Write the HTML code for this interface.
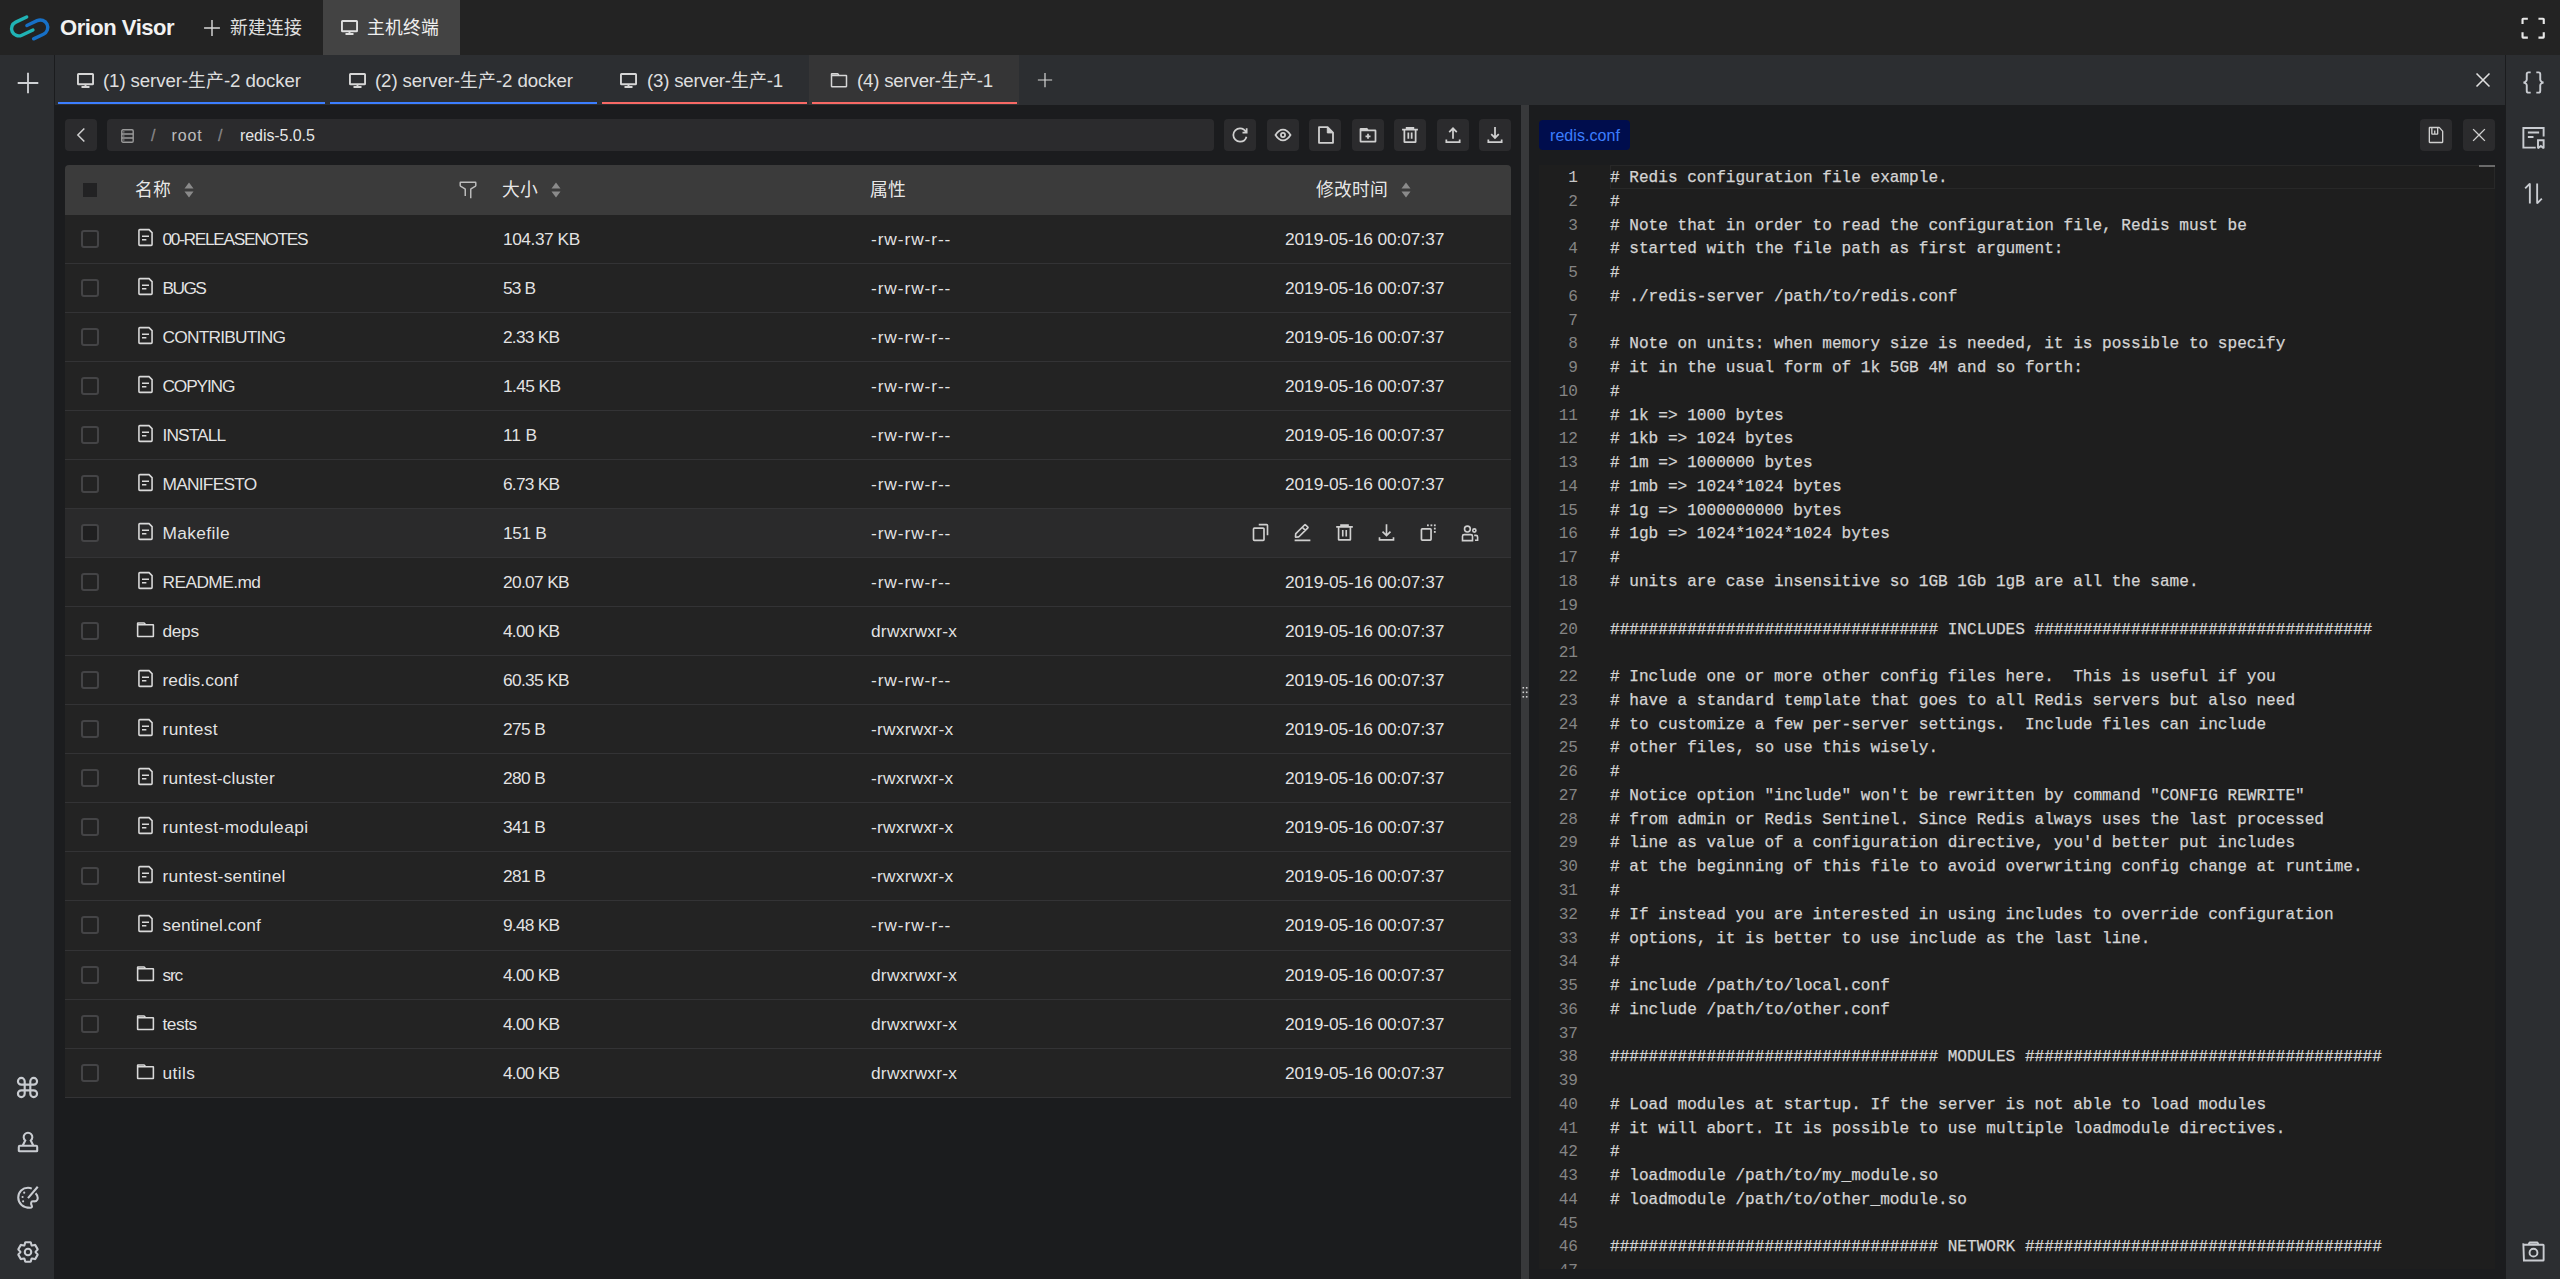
<!DOCTYPE html><html lang="zh-CN"><head><meta charset="utf-8"><title>Orion Visor</title><style>
*{box-sizing:border-box;margin:0;padding:0}
html,body{width:2560px;height:1279px;overflow:hidden;background:#1b1c1e}
body{position:relative;font-family:"Liberation Sans",sans-serif;color:rgba(255,255,255,.9)}
.abs{position:absolute}
svg{display:block;overflow:visible}
.ic{fill:none;stroke:currentColor;stroke-linecap:butt;stroke-linejoin:miter;stroke-miterlimit:2}
.t{white-space:nowrap;line-height:1}
.blk{position:absolute}
.zh{font-size:17.8px}
.wm{position:absolute;width:62px;height:24px;line-height:24px;text-align:center;font-size:22.5px;color:rgba(255,255,255,.022);transform:rotate(-28deg);white-space:nowrap}
.t .zh{letter-spacing:0}
</style></head><body>
<div class="blk" style="left:0;top:0;width:2560px;height:55px;background:#232323"></div>
<svg class="abs" style="left:0;top:0;width:55px;height:55px" viewBox="0 0 55 55">
<g transform="rotate(-25)" fill="none" stroke-width="3.4" stroke-linecap="round">
<path d="M17 26.7H4.9A7.2 7.2 0 0 0 4.9 41.1H17.2" stroke="#20b3b5"/>
<path d="M13.6 34.4H24.9A7.5 7.5 0 0 1 24.9 49.4H14" stroke="#1770c6"/>
</g></svg>
<div class="abs t" style="left:60px;top:16.5px;font-size:22px;color:#f2f2f2;letter-spacing:-0.484px;font-weight:bold">Orion Visor</div>
<svg class="abs ic" style="left:202px;top:18px;width:20px;height:20px;color:#d9d9d9;stroke-width:3.4px;" viewBox="0 0 48 48"><path d="M5 24h38M24 5v38"/></svg>
<div class="abs t" style="left:229.5px;top:19px;font-size:18.67px;color:#e0e0e0;"><span class="zh">新建连接</span></div>
<div class="blk" style="left:323px;top:0;width:137px;height:55px;background:#434343"></div>
<svg class="abs" style="left:341px;top:20px;width:17px;height:15px" viewBox="0 0 17 15" fill="none" stroke="#e0e0e0" stroke-width="1.9"><rect x="0.95" y="0.95" width="15.1" height="10.3" rx="0.6"/><path d="M8.5 11.3v2.7M4.5 14h8"/></svg>
<div class="abs t" style="left:366.5px;top:19px;font-size:18.67px;color:#f0f0f0;"><span class="zh">主机终端</span></div>
<svg class="abs ic" style="left:2518.6px;top:13.7px;width:28.3px;height:28.3px;color:#e8e8e8;stroke-width:3.6px;" viewBox="0 0 48 48"><path d="M42 17V9a1 1 0 0 0-1-1h-8M6 17V9a1 1 0 0 1 1-1h8m27 23v8a1 1 0 0 1-1 1h-8M6 31v8a1 1 0 0 0 1 1h8"/></svg>
<div class="blk" style="left:0;top:55px;width:54px;height:1224px;background:#2c2e31"></div>
<div class="blk" style="left:55px;top:55px;width:2450px;height:50px;background:#2c2e31"></div>
<div class="blk" style="left:2506px;top:55px;width:54px;height:1224px;background:#2c2e31"></div>
<svg class="abs ic" style="left:15px;top:70px;width:26px;height:26px;color:#cfd1d4;stroke-width:3.4px;" viewBox="0 0 48 48"><path d="M5 24h38M24 5v38"/></svg>
<svg class="abs ic" style="left:14px;top:1073.5px;width:27px;height:27px;color:#c9ccd1;stroke-width:3.8px;" viewBox="0 0 48 48"><path d="M29 19v-6a6 6 0 1 1 6 6h-6Zm0 0v10m0-10H19m10 10v6a6 6 0 1 0 6-6h-6Zm0 0H19m0 0V19m0 10v6a6 6 0 1 1-6-6h6Zm0-10v-6a6 6 0 1 0-6 6h6Z"/></svg>
<svg class="abs ic" style="left:14.5px;top:1129px;width:26px;height:26px;color:#c9ccd1;stroke-width:3.8px;" viewBox="0 0 48 48"><path d="M7 33a2 2 0 0 1 2-2h30a2 2 0 0 1 2 2v7a1 1 0 0 1-1 1H8a1 1 0 0 1-1-1v-7ZM29.081 21.18a8 8 0 1 0-10.163 0L14 31h20l-4.919-9.82Z"/></svg>
<svg class="abs ic" style="left:14.5px;top:1184px;width:26px;height:26px;color:#c9ccd1;stroke-width:3.8px;" viewBox="0 0 48 48"><path d="M38 17c3 3 4 6 4 9 0 7-6 6-9 6-4 0-4 5-2 8 1 2 0 4-3 4C15 44 6 36 6 25 6 14 14 7 24 7c3 0 5 .5 7 1.5"/><path d="M42 5 24 26"/><circle cx="14" cy="24" r="2" fill="currentColor" stroke="none"/><circle cx="17" cy="16" r="2" fill="currentColor" stroke="none"/><circle cx="15" cy="32" r="2" fill="currentColor" stroke="none"/></svg>
<svg class="abs ic" style="left:14.5px;top:1238.5px;width:26px;height:26px;color:#c9ccd1;stroke-width:3.8px;" viewBox="0 0 48 48"><path d="M18.797 6.732A1 1 0 0 1 19.76 6h8.48a1 1 0 0 1 .964.732l1.285 4.628a1 1 0 0 0 1.213.7l4.651-1.2a1 1 0 0 1 1.116.468l4.24 7.344a1 1 0 0 1-.153 1.2L38.193 23.3a1 1 0 0 0 0 1.402l3.364 3.427a1 1 0 0 1 .153 1.2l-4.24 7.344a1 1 0 0 1-1.116.468l-4.65-1.2a1 1 0 0 0-1.214.7l-1.285 4.628a1 1 0 0 1-.964.732h-8.48a1 1 0 0 1-.963-.732L17.51 36.64a1 1 0 0 0-1.213-.7l-4.65 1.2a1 1 0 0 1-1.116-.468l-4.24-7.344a1 1 0 0 1 .153-1.2L9.809 24.7a1 1 0 0 0 0-1.402l-3.364-3.427a1 1 0 0 1-.153-1.2l4.24-7.344a1 1 0 0 1 1.116-.468l4.65 1.2a1 1 0 0 0 1.213-.7l1.286-4.628Z"/><path d="M30 24a6 6 0 1 1-12 0 6 6 0 0 1 12 0Z"/></svg>
<svg class="abs ic" style="left:2520px;top:69px;width:27px;height:27px;color:#c9ccd1;stroke-width:3.4px;" viewBox="0 0 48 48"><path d="M19 6h-4a3 3 0 0 0-3 3v10c0 3-4.343 5-6 5 1.657 0 6 2 6 5v10a3 3 0 0 0 3 3h4M29 6h4a3 3 0 0 1 3 3v10c0 3 4.343 5 6 5-1.657 0-6 2-6 5v10a3 3 0 0 1-3 3h-4"/></svg>
<svg class="abs ic" style="left:2520px;top:124px;width:27px;height:27px;color:#c9ccd1;stroke-width:3.4px;" viewBox="0 0 48 48"><path d="M42 22V7H6v35h22M14 15h20M14 23h10"/><path d="M32 29h10v14l-5-4-5 4V29Z"/></svg>
<svg class="abs ic" style="left:2520.5px;top:180.5px;width:25px;height:25px;color:#c9ccd1;stroke-width:3.6px;" viewBox="0 0 48 48"><path d="M17 43V5L8 14M31 5v38l9-9"/></svg>
<svg class="abs ic" style="left:2520px;top:1238px;width:27px;height:27px;color:#c9ccd1;stroke-width:3.4px;" viewBox="0 0 48 48"><path d="m33 12-1.862-3.724A.5.5 0 0 0 30.691 8H17.309a.5.5 0 0 0-.447.276L15 12m16 14a7 7 0 1 1-14 0 7 7 0 0 1 14 0ZM7 40h34a1 1 0 0 0 1-1V13a1 1 0 0 0-1-1H7a1 1 0 0 0-1-1Z"/></svg>
<div class="blk" style="left:809px;top:55px;width:210px;height:50px;background:#353536"></div>
<div class="blk" style="left:58px;top:102px;width:267px;height:2px;background:#3c7eff"></div>
<svg class="abs" style="left:77px;top:73px;width:17px;height:15px" viewBox="0 0 17 15" fill="none" stroke="#d6d6d6" stroke-width="1.9"><rect x="0.95" y="0.95" width="15.1" height="10.3" rx="0.6"/><path d="M8.5 11.3v2.7M4.5 14h8"/></svg>
<div class="abs t" style="left:103px;top:71.5px;font-size:18.67px;color:rgba(255,255,255,.86);letter-spacing:-0.1px">(1) server-<span class="zh">生产</span>-2 docker</div>
<div class="blk" style="left:330px;top:102px;width:267px;height:2px;background:#3c7eff"></div>
<svg class="abs" style="left:349px;top:73px;width:17px;height:15px" viewBox="0 0 17 15" fill="none" stroke="#d6d6d6" stroke-width="1.9"><rect x="0.95" y="0.95" width="15.1" height="10.3" rx="0.6"/><path d="M8.5 11.3v2.7M4.5 14h8"/></svg>
<div class="abs t" style="left:375px;top:71.5px;font-size:18.67px;color:rgba(255,255,255,.86);letter-spacing:-0.1px">(2) server-<span class="zh">生产</span>-2 docker</div>
<div class="blk" style="left:602px;top:102px;width:205px;height:2px;background:#f76965"></div>
<svg class="abs" style="left:620px;top:73px;width:17px;height:15px" viewBox="0 0 17 15" fill="none" stroke="#d6d6d6" stroke-width="1.9"><rect x="0.95" y="0.95" width="15.1" height="10.3" rx="0.6"/><path d="M8.5 11.3v2.7M4.5 14h8"/></svg>
<div class="abs t" style="left:647px;top:71.5px;font-size:18.67px;color:rgba(255,255,255,.86);letter-spacing:-0.2px">(3) server-<span class="zh">生产</span>-1</div>
<div class="blk" style="left:812px;top:102px;width:205px;height:2px;background:#f76965"></div>
<svg class="abs ic" style="left:829px;top:70px;width:20px;height:20px;color:#d6d6d6;stroke-width:3.6px;" viewBox="0 0 48 48"><path d="M6 13h18l-2.527-3.557a1.077 1.077 0 0 0-.88-.443H6.774C6.346 9 6 9.336 6 9.75v29.5c0 .414.346.75.773.75h34.454c.427 0 .773-.336.773-.75V13.75c0-.414-.346-.75-.773-.75H24"/></svg>
<div class="abs t" style="left:857px;top:71.5px;font-size:18.67px;color:rgba(255,255,255,.86);letter-spacing:-0.2px">(4) server-<span class="zh">生产</span>-1</div>
<svg class="abs ic" style="left:1036px;top:71px;width:18px;height:18px;color:#d6d6d6;stroke-width:3.2px;" viewBox="0 0 48 48"><path d="M5 24h38M24 5v38"/></svg>
<svg class="abs ic" style="left:2472px;top:69px;width:22px;height:22px;color:#e0e0e0;stroke-width:3.4px;" viewBox="0 0 48 48"><path d="M9.857 9.858 24 24m0 0 14.142 14.142M24 24 38.142 9.858M24 24 9.857 38.142"/></svg>
<div class="blk" style="left:65px;top:119px;width:32px;height:32px;border-radius:4px;background:#2b2b2d"></div>
<svg class="abs ic" style="left:71px;top:125px;width:20px;height:20px;color:#cfcfcf;stroke-width:3.6px;" viewBox="0 0 48 48"><path d="M32 8.4 16.444 23.956 32 39.513"/></svg>
<div class="blk" style="left:107px;top:119px;width:1107px;height:32px;border-radius:4px;background:#2b2b2d"></div>
<svg class="abs" style="left:121px;top:128.5px;width:13px;height:14px" viewBox="0 0 13 14" fill="none" stroke="#9a9a9a" stroke-width="1.4"><rect x="0.8" y="0.8" width="11.4" height="12.4" rx="1.2"/><path d="M0.8 5H12.2M0.8 9H12.2"/><g fill="#9a9a9a" stroke="none"><rect x="2.2" y="2.3" width="1.2" height="1.2"/><rect x="2.2" y="6.4" width="1.2" height="1.2"/><rect x="2.2" y="10.4" width="1.2" height="1.2"/></g></svg>
<div class="abs t" style="left:151px;top:127.5px;font-size:16px;color:rgba(255,255,255,.38);-webkit-text-stroke:0.4px rgba(255,255,255,.3)">/</div>
<div class="abs t" style="left:171.5px;top:127.5px;font-size:16px;color:rgba(255,255,255,.7);letter-spacing:0.892px;">root</div>
<div class="abs t" style="left:218px;top:127.5px;font-size:16px;color:rgba(255,255,255,.38);-webkit-text-stroke:0.4px rgba(255,255,255,.3)">/</div>
<div class="abs t" style="left:240px;top:127.5px;font-size:16px;color:rgba(255,255,255,.9);letter-spacing:-0.070px;">redis-5.0.5</div>
<div class="blk" style="left:1224.0px;top:119px;width:32px;height:32px;border-radius:4px;background:#2b2b2d"></div>
<svg class="abs ic" style="left:1230.0px;top:125px;width:20px;height:20px;color:#d0d0d0;stroke-width:4.2px;" viewBox="0 0 48 48"><path d="M38.837 18C36.463 12.136 30.715 8 24 8 15.163 8 8 15.163 8 24s7.163 16 16 16c7.455 0 13.72-5.1 15.496-12M40 8v10H30"/></svg>
<div class="blk" style="left:1266.5px;top:119px;width:32px;height:32px;border-radius:4px;background:#2b2b2d"></div>
<svg class="abs ic" style="left:1272.5px;top:125px;width:20px;height:20px;color:#d0d0d0;stroke-width:4.2px;" viewBox="0 0 48 48"><path d="M24 37c6.627 0 12.627-4.333 18-13-5.373-8.667-11.373-13-18-13-6.627 0-12.627 4.333-18 13 5.373 8.667 11.373 13 18 13Z"/><path d="M29 24a5 5 0 1 1-10 0 5 5 0 0 1 10 0Z"/></svg>
<div class="blk" style="left:1309.0px;top:119px;width:32px;height:32px;border-radius:4px;background:#2b2b2d"></div>
<svg class="abs" style="left:1317.5px;top:126px;width:16px;height:18px" viewBox="0 0 16 18" fill="none" stroke="#d0d0d0" stroke-width="1.8" stroke-linejoin="round"><path d="M1 1.2H9.6L15 6.6V16.8H1Z"/><path d="M9.3 1.6V6.9H14.6Z" fill="#d0d0d0" stroke-width="1"/></svg>
<div class="blk" style="left:1351.5px;top:119px;width:32px;height:32px;border-radius:4px;background:#2b2b2d"></div>
<svg class="abs ic" style="left:1357.5px;top:125px;width:20px;height:20px;color:#d0d0d0;stroke-width:4.2px;" viewBox="0 0 48 48"><path d="M6 13h18l-2.527-3.557a1.077 1.077 0 0 0-.88-.443H6.774C6.346 9 6 9.336 6 9.75v29.5c0 .414.346.75.773.75h34.454c.427 0 .773-.336.773-.75V13.75c0-.414-.346-.75-.773-.75H24M24 21v12M18 27h12"/></svg>
<div class="blk" style="left:1394.0px;top:119px;width:32px;height:32px;border-radius:4px;background:#2b2b2d"></div>
<svg class="abs ic" style="left:1400.0px;top:125px;width:20px;height:20px;color:#d0d0d0;stroke-width:4.2px;" viewBox="0 0 48 48"><path d="M5 11h5.5m0 0v29a1 1 0 0 0 1 1h25a1 1 0 0 0 1-1V11m-27 0H16m21.5 0H43m-5.5 0H32m-16 0V7h16v4m-16 0h16M20 18v15m8-15v15"/></svg>
<div class="blk" style="left:1436.5px;top:119px;width:32px;height:32px;border-radius:4px;background:#2b2b2d"></div>
<svg class="abs ic" style="left:1442.5px;top:125px;width:20px;height:20px;color:#d0d0d0;stroke-width:4.2px;" viewBox="0 0 48 48"><path d="M14.93 17.071 24.001 8l9.071 9.071m-9.07 16.071v-25M40 35v6H8v-6"/></svg>
<div class="blk" style="left:1479.0px;top:119px;width:32px;height:32px;border-radius:4px;background:#2b2b2d"></div>
<svg class="abs ic" style="left:1485.0px;top:125px;width:20px;height:20px;color:#d0d0d0;stroke-width:4.2px;" viewBox="0 0 48 48"><path d="m33.072 22.071-9.07 9.071-9.072-9.07M24 5v26m16 4v6H8v-6"/></svg>
<div class="blk" style="left:65px;top:165px;width:1446px;height:50px;border-radius:4px 4px 0 0;background:#3b3b3b"></div>
<div class="blk" style="left:83px;top:183px;width:14px;height:14px;background:#222223"></div>
<div class="abs t" style="left:135px;top:181px;font-size:18.67px;color:rgba(255,255,255,.9);"><span class="zh">名称</span></div>
<svg class="abs" style="left:184px;top:182px;width:10px;height:16px" viewBox="0 0 10 16"><path d="M5 0.5 9.5 6.5H0.5Z M5 15.5 9.5 9.5H0.5Z" fill="#8a8a8a"/></svg>
<svg class="abs ic" style="left:457px;top:179px;width:22px;height:22px;color:#bdbdbd;stroke-width:3.2px;" viewBox="0 0 48 48"><path d="M30 42V22.549a1 1 0 0 1 .463-.844l10.074-6.41A1 1 0 0 0 41 14.45V8a1 1 0 0 0-1-1H8a1 1 0 0 0-1 1v6.451a1 1 0 0 0 .463.844l10.074 6.41a1 1 0 0 1 .463.844V37"/></svg>
<div class="abs t" style="left:502px;top:181px;font-size:18.67px;color:rgba(255,255,255,.9);"><span class="zh">大小</span></div>
<svg class="abs" style="left:551px;top:182px;width:10px;height:16px" viewBox="0 0 10 16"><path d="M5 0.5 9.5 6.5H0.5Z M5 15.5 9.5 9.5H0.5Z" fill="#8a8a8a"/></svg>
<div class="abs t" style="left:870px;top:181px;font-size:18.67px;color:rgba(255,255,255,.9);"><span class="zh">属性</span></div>
<div class="abs t" style="left:1316px;top:181px;font-size:18.67px;color:rgba(255,255,255,.9);"><span class="zh">修改时间</span></div>
<svg class="abs" style="left:1401px;top:182px;width:10px;height:16px" viewBox="0 0 10 16"><path d="M5 0.5 9.5 6.5H0.5Z M5 15.5 9.5 9.5H0.5Z" fill="#8a8a8a"/></svg>
<div class="blk" style="left:65px;top:215px;width:1446px;height:49px;background:#232323;border-bottom:1px solid #333335"></div>
<div class="blk" style="left:81px;top:230px;width:18px;height:18px;border:2px solid #444446;border-radius:3px;"></div>
<svg class="abs ic" style="left:134.8px;top:226.7px;width:21px;height:21px;color:#d9d9d9;stroke-width:3.6px;" viewBox="0 0 48 48"><path d="M16 21h16m-16 8h10m11 13H11a2 2 0 0 1-2-2V8a2 2 0 0 1 2-2h21l7 7v27a2 2 0 0 1-2 2Z"/></svg>
<div class="abs t" style="left:162.5px;top:230.7px;font-size:17.33px;color:rgba(255,255,255,.88);letter-spacing:-1.330px;">00-RELEASENOTES</div>
<div class="abs t" style="left:503px;top:230.7px;font-size:17.33px;color:rgba(255,255,255,.88);letter-spacing:-0.459px;">104.37 KB</div>
<div class="abs t" style="left:871px;top:230.7px;font-size:17.33px;color:rgba(255,255,255,.88);letter-spacing:0.909px;">-rw-rw-r--</div>
<div class="abs t" style="left:1285px;top:230.7px;font-size:17.33px;color:rgba(255,255,255,.88);letter-spacing:-0.087px;">2019-05-16 00:07:37</div>
<div class="blk" style="left:65px;top:264px;width:1446px;height:49px;background:#232323;border-bottom:1px solid #333335"></div>
<div class="blk" style="left:81px;top:279px;width:18px;height:18px;border:2px solid #444446;border-radius:3px;"></div>
<svg class="abs ic" style="left:134.8px;top:275.7px;width:21px;height:21px;color:#d9d9d9;stroke-width:3.6px;" viewBox="0 0 48 48"><path d="M16 21h16m-16 8h10m11 13H11a2 2 0 0 1-2-2V8a2 2 0 0 1 2-2h21l7 7v27a2 2 0 0 1-2 2Z"/></svg>
<div class="abs t" style="left:162.5px;top:279.7px;font-size:17.33px;color:rgba(255,255,255,.88);letter-spacing:-1.583px;">BUGS</div>
<div class="abs t" style="left:503px;top:279.7px;font-size:17.33px;color:rgba(255,255,255,.88);letter-spacing:-0.829px;">53 B</div>
<div class="abs t" style="left:871px;top:279.7px;font-size:17.33px;color:rgba(255,255,255,.88);letter-spacing:0.909px;">-rw-rw-r--</div>
<div class="abs t" style="left:1285px;top:279.7px;font-size:17.33px;color:rgba(255,255,255,.88);letter-spacing:-0.087px;">2019-05-16 00:07:37</div>
<div class="blk" style="left:65px;top:313px;width:1446px;height:49px;background:#232323;border-bottom:1px solid #333335"></div>
<div class="blk" style="left:81px;top:328px;width:18px;height:18px;border:2px solid #444446;border-radius:3px;"></div>
<svg class="abs ic" style="left:134.8px;top:324.7px;width:21px;height:21px;color:#d9d9d9;stroke-width:3.6px;" viewBox="0 0 48 48"><path d="M16 21h16m-16 8h10m11 13H11a2 2 0 0 1-2-2V8a2 2 0 0 1 2-2h21l7 7v27a2 2 0 0 1-2 2Z"/></svg>
<div class="abs t" style="left:162.5px;top:328.7px;font-size:17.33px;color:rgba(255,255,255,.88);letter-spacing:-0.773px;">CONTRIBUTING</div>
<div class="abs t" style="left:503px;top:328.7px;font-size:17.33px;color:rgba(255,255,255,.88);letter-spacing:-0.766px;">2.33 KB</div>
<div class="abs t" style="left:871px;top:328.7px;font-size:17.33px;color:rgba(255,255,255,.88);letter-spacing:0.909px;">-rw-rw-r--</div>
<div class="abs t" style="left:1285px;top:328.7px;font-size:17.33px;color:rgba(255,255,255,.88);letter-spacing:-0.087px;">2019-05-16 00:07:37</div>
<div class="blk" style="left:65px;top:362px;width:1446px;height:49px;background:#232323;border-bottom:1px solid #333335"></div>
<div class="blk" style="left:81px;top:377px;width:18px;height:18px;border:2px solid #444446;border-radius:3px;"></div>
<svg class="abs ic" style="left:134.8px;top:373.7px;width:21px;height:21px;color:#d9d9d9;stroke-width:3.6px;" viewBox="0 0 48 48"><path d="M16 21h16m-16 8h10m11 13H11a2 2 0 0 1-2-2V8a2 2 0 0 1 2-2h21l7 7v27a2 2 0 0 1-2 2Z"/></svg>
<div class="abs t" style="left:162.5px;top:377.7px;font-size:17.33px;color:rgba(255,255,255,.88);letter-spacing:-1.173px;">COPYING</div>
<div class="abs t" style="left:503px;top:377.7px;font-size:17.33px;color:rgba(255,255,255,.88);letter-spacing:-0.600px;">1.45 KB</div>
<div class="abs t" style="left:871px;top:377.7px;font-size:17.33px;color:rgba(255,255,255,.88);letter-spacing:0.909px;">-rw-rw-r--</div>
<div class="abs t" style="left:1285px;top:377.7px;font-size:17.33px;color:rgba(255,255,255,.88);letter-spacing:-0.087px;">2019-05-16 00:07:37</div>
<div class="blk" style="left:65px;top:411px;width:1446px;height:49px;background:#232323;border-bottom:1px solid #333335"></div>
<div class="blk" style="left:81px;top:426px;width:18px;height:18px;border:2px solid #444446;border-radius:3px;"></div>
<svg class="abs ic" style="left:134.8px;top:422.7px;width:21px;height:21px;color:#d9d9d9;stroke-width:3.6px;" viewBox="0 0 48 48"><path d="M16 21h16m-16 8h10m11 13H11a2 2 0 0 1-2-2V8a2 2 0 0 1 2-2h21l7 7v27a2 2 0 0 1-2 2Z"/></svg>
<div class="abs t" style="left:162.5px;top:426.7px;font-size:17.33px;color:rgba(255,255,255,.88);letter-spacing:-0.897px;">INSTALL</div>
<div class="abs t" style="left:503px;top:426.7px;font-size:17.33px;color:rgba(255,255,255,.88);letter-spacing:-0.067px;">11 B</div>
<div class="abs t" style="left:871px;top:426.7px;font-size:17.33px;color:rgba(255,255,255,.88);letter-spacing:0.909px;">-rw-rw-r--</div>
<div class="abs t" style="left:1285px;top:426.7px;font-size:17.33px;color:rgba(255,255,255,.88);letter-spacing:-0.087px;">2019-05-16 00:07:37</div>
<div class="blk" style="left:65px;top:460px;width:1446px;height:49px;background:#232323;border-bottom:1px solid #333335"></div>
<div class="blk" style="left:81px;top:475px;width:18px;height:18px;border:2px solid #444446;border-radius:3px;"></div>
<svg class="abs ic" style="left:134.8px;top:471.7px;width:21px;height:21px;color:#d9d9d9;stroke-width:3.6px;" viewBox="0 0 48 48"><path d="M16 21h16m-16 8h10m11 13H11a2 2 0 0 1-2-2V8a2 2 0 0 1 2-2h21l7 7v27a2 2 0 0 1-2 2Z"/></svg>
<div class="abs t" style="left:162.5px;top:475.7px;font-size:17.33px;color:rgba(255,255,255,.88);letter-spacing:-0.749px;">MANIFESTO</div>
<div class="abs t" style="left:503px;top:475.7px;font-size:17.33px;color:rgba(255,255,255,.88);letter-spacing:-0.766px;">6.73 KB</div>
<div class="abs t" style="left:871px;top:475.7px;font-size:17.33px;color:rgba(255,255,255,.88);letter-spacing:0.909px;">-rw-rw-r--</div>
<div class="abs t" style="left:1285px;top:475.7px;font-size:17.33px;color:rgba(255,255,255,.88);letter-spacing:-0.087px;">2019-05-16 00:07:37</div>
<div class="blk" style="left:65px;top:509px;width:1446px;height:49px;background:#2a2a2b;border-bottom:1px solid #333335"></div>
<div class="blk" style="left:81px;top:524px;width:18px;height:18px;border:2px solid #444446;border-radius:3px;background:#1f1f20;"></div>
<svg class="abs ic" style="left:134.8px;top:520.7px;width:21px;height:21px;color:#d9d9d9;stroke-width:3.6px;" viewBox="0 0 48 48"><path d="M16 21h16m-16 8h10m11 13H11a2 2 0 0 1-2-2V8a2 2 0 0 1 2-2h21l7 7v27a2 2 0 0 1-2 2Z"/></svg>
<div class="abs t" style="left:162.5px;top:524.7px;font-size:17.33px;color:rgba(255,255,255,.88);letter-spacing:0.359px;">Makefile</div>
<div class="abs t" style="left:503px;top:524.7px;font-size:17.33px;color:rgba(255,255,255,.88);letter-spacing:-0.381px;">151 B</div>
<div class="abs t" style="left:871px;top:524.7px;font-size:17.33px;color:rgba(255,255,255,.88);letter-spacing:0.909px;">-rw-rw-r--</div>
<svg class="abs ic" style="left:1249.5px;top:522px;width:21px;height:21px;color:#cfcfcf;stroke-width:3.8px;" viewBox="0 0 48 48"><path d="M20 6h18a2 2 0 0 1 2 2v22M8 16v24c0 1.105.891 2 1.996 2h20.007A1.99 1.99 0 0 0 32 40.008V15.997A1.997 1.997 0 0 0 30 14H10a2 2 0 0 0-2 2Z"/></svg>
<svg class="abs ic" style="left:1291.5px;top:522px;width:21px;height:21px;color:#cfcfcf;stroke-width:3.8px;" viewBox="0 0 48 48"><path d="m30.48 19.038 5.733-5.734a1 1 0 0 0 0-1.414l-5.586-5.586a1 1 0 0 0-1.414 0l-5.734 5.734m7 7L15.763 33.754a1 1 0 0 1-.59.286l-6.048.708a1 1 0 0 1-1.113-1.069l.477-6.31a1 1 0 0 1 .29-.631l14.7-14.7m7 7-7-7M6 42h36"/></svg>
<svg class="abs ic" style="left:1333.5px;top:522px;width:21px;height:21px;color:#cfcfcf;stroke-width:3.8px;" viewBox="0 0 48 48"><path d="M5 11h5.5m0 0v29a1 1 0 0 0 1 1h25a1 1 0 0 0 1-1V11m-27 0H16m21.5 0H43m-5.5 0H32m-16 0V7h16v4m-16 0h16M20 18v15m8-15v15"/></svg>
<svg class="abs ic" style="left:1375.5px;top:522px;width:21px;height:21px;color:#cfcfcf;stroke-width:3.8px;" viewBox="0 0 48 48"><path d="m33.072 22.071-9.07 9.071-9.072-9.07M24 5v26m16 4v6H8v-6"/></svg>
<svg class="abs" style="left:1419px;top:522px;width:18px;height:20px" viewBox="0 0 18 20" fill="none" stroke="#cfcfcf" stroke-width="1.7"><rect x="2.45" y="6.95" width="9.6" height="11.1" rx="0.8"/><g fill="#cfcfcf" stroke="none"><rect x="8" y="2.4" width="1.8" height="1.8"/><rect x="11.5" y="2.4" width="1.8" height="1.8"/><rect x="14.9" y="2.4" width="1.8" height="1.8"/><rect x="14.9" y="5.7" width="1.8" height="1.8"/><rect x="14.9" y="9" width="1.8" height="1.8"/></g></svg>
<svg class="abs" style="left:1460px;top:522px;width:20px;height:20px" viewBox="0 0 20 20" fill="none" stroke="#cfcfcf" stroke-width="1.6"><circle cx="7.4" cy="7.05" r="2.9"/><circle cx="14.35" cy="8.5" r="1.6"/><path d="M2.5 18.6V14.2a1.6 1.6 0 0 1 1.6-1.6h6.8a1.6 1.6 0 0 1 1.6 1.6v4.4Z"/><path d="M14.2 13.4h1.8a1.6 1.6 0 0 1 1.6 1.6v3.2h-2.6"/></svg>
<div class="blk" style="left:65px;top:558px;width:1446px;height:49px;background:#232323;border-bottom:1px solid #333335"></div>
<div class="blk" style="left:81px;top:573px;width:18px;height:18px;border:2px solid #444446;border-radius:3px;"></div>
<svg class="abs ic" style="left:134.8px;top:569.7px;width:21px;height:21px;color:#d9d9d9;stroke-width:3.6px;" viewBox="0 0 48 48"><path d="M16 21h16m-16 8h10m11 13H11a2 2 0 0 1-2-2V8a2 2 0 0 1 2-2h21l7 7v27a2 2 0 0 1-2 2Z"/></svg>
<div class="abs t" style="left:162.5px;top:573.7px;font-size:17.33px;color:rgba(255,255,255,.88);letter-spacing:-0.573px;">README.md</div>
<div class="abs t" style="left:503px;top:573.7px;font-size:17.33px;color:rgba(255,255,255,.88);letter-spacing:-0.662px;">20.07 KB</div>
<div class="abs t" style="left:871px;top:573.7px;font-size:17.33px;color:rgba(255,255,255,.88);letter-spacing:0.909px;">-rw-rw-r--</div>
<div class="abs t" style="left:1285px;top:573.7px;font-size:17.33px;color:rgba(255,255,255,.88);letter-spacing:-0.087px;">2019-05-16 00:07:37</div>
<div class="blk" style="left:65px;top:607px;width:1446px;height:49px;background:#232323;border-bottom:1px solid #333335"></div>
<div class="blk" style="left:81px;top:622px;width:18px;height:18px;border:2px solid #444446;border-radius:3px;"></div>
<svg class="abs ic" style="left:134.6px;top:618.8px;width:21px;height:21px;color:#d9d9d9;stroke-width:3.6px;" viewBox="0 0 48 48"><path d="M6 13h18l-2.527-3.557a1.077 1.077 0 0 0-.88-.443H6.774C6.346 9 6 9.336 6 9.75v29.5c0 .414.346.75.773.75h34.454c.427 0 .773-.336.773-.75V13.75c0-.414-.346-.75-.773-.75H24"/></svg>
<div class="abs t" style="left:162.5px;top:622.7px;font-size:17.33px;color:rgba(255,255,255,.88);letter-spacing:-0.337px;">deps</div>
<div class="abs t" style="left:503px;top:622.7px;font-size:17.33px;color:rgba(255,255,255,.88);letter-spacing:-0.766px;">4.00 KB</div>
<div class="abs t" style="left:871px;top:622.7px;font-size:17.33px;color:rgba(255,255,255,.88);letter-spacing:0.236px;">drwxrwxr-x</div>
<div class="abs t" style="left:1285px;top:622.7px;font-size:17.33px;color:rgba(255,255,255,.88);letter-spacing:-0.087px;">2019-05-16 00:07:37</div>
<div class="blk" style="left:65px;top:656px;width:1446px;height:49px;background:#232323;border-bottom:1px solid #333335"></div>
<div class="blk" style="left:81px;top:671px;width:18px;height:18px;border:2px solid #444446;border-radius:3px;"></div>
<svg class="abs ic" style="left:134.8px;top:667.7px;width:21px;height:21px;color:#d9d9d9;stroke-width:3.6px;" viewBox="0 0 48 48"><path d="M16 21h16m-16 8h10m11 13H11a2 2 0 0 1-2-2V8a2 2 0 0 1 2-2h21l7 7v27a2 2 0 0 1-2 2Z"/></svg>
<div class="abs t" style="left:162.5px;top:671.7px;font-size:17.33px;color:rgba(255,255,255,.88);letter-spacing:0.054px;">redis.conf</div>
<div class="abs t" style="left:503px;top:671.7px;font-size:17.33px;color:rgba(255,255,255,.88);letter-spacing:-0.662px;">60.35 KB</div>
<div class="abs t" style="left:871px;top:671.7px;font-size:17.33px;color:rgba(255,255,255,.88);letter-spacing:0.909px;">-rw-rw-r--</div>
<div class="abs t" style="left:1285px;top:671.7px;font-size:17.33px;color:rgba(255,255,255,.88);letter-spacing:-0.087px;">2019-05-16 00:07:37</div>
<div class="blk" style="left:65px;top:705px;width:1446px;height:49px;background:#232323;border-bottom:1px solid #333335"></div>
<div class="blk" style="left:81px;top:720px;width:18px;height:18px;border:2px solid #444446;border-radius:3px;"></div>
<svg class="abs ic" style="left:134.8px;top:716.7px;width:21px;height:21px;color:#d9d9d9;stroke-width:3.6px;" viewBox="0 0 48 48"><path d="M16 21h16m-16 8h10m11 13H11a2 2 0 0 1-2-2V8a2 2 0 0 1 2-2h21l7 7v27a2 2 0 0 1-2 2Z"/></svg>
<div class="abs t" style="left:162.5px;top:720.7px;font-size:17.33px;color:rgba(255,255,255,.88);letter-spacing:0.357px;">runtest</div>
<div class="abs t" style="left:503px;top:720.7px;font-size:17.33px;color:rgba(255,255,255,.88);letter-spacing:-0.631px;">275 B</div>
<div class="abs t" style="left:871px;top:720.7px;font-size:17.33px;color:rgba(255,255,255,.88);letter-spacing:0.244px;">-rwxrwxr-x</div>
<div class="abs t" style="left:1285px;top:720.7px;font-size:17.33px;color:rgba(255,255,255,.88);letter-spacing:-0.087px;">2019-05-16 00:07:37</div>
<div class="blk" style="left:65px;top:754px;width:1446px;height:49px;background:#232323;border-bottom:1px solid #333335"></div>
<div class="blk" style="left:81px;top:769px;width:18px;height:18px;border:2px solid #444446;border-radius:3px;"></div>
<svg class="abs ic" style="left:134.8px;top:765.7px;width:21px;height:21px;color:#d9d9d9;stroke-width:3.6px;" viewBox="0 0 48 48"><path d="M16 21h16m-16 8h10m11 13H11a2 2 0 0 1-2-2V8a2 2 0 0 1 2-2h21l7 7v27a2 2 0 0 1-2 2Z"/></svg>
<div class="abs t" style="left:162.5px;top:769.7px;font-size:17.33px;color:rgba(255,255,255,.88);letter-spacing:0.171px;">runtest-cluster</div>
<div class="abs t" style="left:503px;top:769.7px;font-size:17.33px;color:rgba(255,255,255,.88);letter-spacing:-0.631px;">280 B</div>
<div class="abs t" style="left:871px;top:769.7px;font-size:17.33px;color:rgba(255,255,255,.88);letter-spacing:0.244px;">-rwxrwxr-x</div>
<div class="abs t" style="left:1285px;top:769.7px;font-size:17.33px;color:rgba(255,255,255,.88);letter-spacing:-0.087px;">2019-05-16 00:07:37</div>
<div class="blk" style="left:65px;top:803px;width:1446px;height:49px;background:#232323;border-bottom:1px solid #333335"></div>
<div class="blk" style="left:81px;top:818px;width:18px;height:18px;border:2px solid #444446;border-radius:3px;"></div>
<svg class="abs ic" style="left:134.8px;top:814.7px;width:21px;height:21px;color:#d9d9d9;stroke-width:3.6px;" viewBox="0 0 48 48"><path d="M16 21h16m-16 8h10m11 13H11a2 2 0 0 1-2-2V8a2 2 0 0 1 2-2h21l7 7v27a2 2 0 0 1-2 2Z"/></svg>
<div class="abs t" style="left:162.5px;top:818.7px;font-size:17.33px;color:rgba(255,255,255,.88);letter-spacing:0.434px;">runtest-moduleapi</div>
<div class="abs t" style="left:503px;top:818.7px;font-size:17.33px;color:rgba(255,255,255,.88);letter-spacing:-0.631px;">341 B</div>
<div class="abs t" style="left:871px;top:818.7px;font-size:17.33px;color:rgba(255,255,255,.88);letter-spacing:0.244px;">-rwxrwxr-x</div>
<div class="abs t" style="left:1285px;top:818.7px;font-size:17.33px;color:rgba(255,255,255,.88);letter-spacing:-0.087px;">2019-05-16 00:07:37</div>
<div class="blk" style="left:65px;top:852px;width:1446px;height:49px;background:#232323;border-bottom:1px solid #333335"></div>
<div class="blk" style="left:81px;top:867px;width:18px;height:18px;border:2px solid #444446;border-radius:3px;"></div>
<svg class="abs ic" style="left:134.8px;top:863.7px;width:21px;height:21px;color:#d9d9d9;stroke-width:3.6px;" viewBox="0 0 48 48"><path d="M16 21h16m-16 8h10m11 13H11a2 2 0 0 1-2-2V8a2 2 0 0 1 2-2h21l7 7v27a2 2 0 0 1-2 2Z"/></svg>
<div class="abs t" style="left:162.5px;top:867.7px;font-size:17.33px;color:rgba(255,255,255,.88);letter-spacing:0.299px;">runtest-sentinel</div>
<div class="abs t" style="left:503px;top:867.7px;font-size:17.33px;color:rgba(255,255,255,.88);letter-spacing:-0.631px;">281 B</div>
<div class="abs t" style="left:871px;top:867.7px;font-size:17.33px;color:rgba(255,255,255,.88);letter-spacing:0.244px;">-rwxrwxr-x</div>
<div class="abs t" style="left:1285px;top:867.7px;font-size:17.33px;color:rgba(255,255,255,.88);letter-spacing:-0.087px;">2019-05-16 00:07:37</div>
<div class="blk" style="left:65px;top:901px;width:1446px;height:50px;background:#232323;border-bottom:1px solid #333335"></div>
<div class="blk" style="left:81px;top:916px;width:18px;height:18px;border:2px solid #444446;border-radius:3px;"></div>
<svg class="abs ic" style="left:134.8px;top:912.7px;width:21px;height:21px;color:#d9d9d9;stroke-width:3.6px;" viewBox="0 0 48 48"><path d="M16 21h16m-16 8h10m11 13H11a2 2 0 0 1-2-2V8a2 2 0 0 1 2-2h21l7 7v27a2 2 0 0 1-2 2Z"/></svg>
<div class="abs t" style="left:162.5px;top:916.7px;font-size:17.33px;color:rgba(255,255,255,.88);letter-spacing:0.085px;">sentinel.conf</div>
<div class="abs t" style="left:503px;top:916.7px;font-size:17.33px;color:rgba(255,255,255,.88);letter-spacing:-0.766px;">9.48 KB</div>
<div class="abs t" style="left:871px;top:916.7px;font-size:17.33px;color:rgba(255,255,255,.88);letter-spacing:0.909px;">-rw-rw-r--</div>
<div class="abs t" style="left:1285px;top:916.7px;font-size:17.33px;color:rgba(255,255,255,.88);letter-spacing:-0.087px;">2019-05-16 00:07:37</div>
<div class="blk" style="left:65px;top:951px;width:1446px;height:49px;background:#232323;border-bottom:1px solid #333335"></div>
<div class="blk" style="left:81px;top:966px;width:18px;height:18px;border:2px solid #444446;border-radius:3px;"></div>
<svg class="abs ic" style="left:134.6px;top:962.8px;width:21px;height:21px;color:#d9d9d9;stroke-width:3.6px;" viewBox="0 0 48 48"><path d="M6 13h18l-2.527-3.557a1.077 1.077 0 0 0-.88-.443H6.774C6.346 9 6 9.336 6 9.75v29.5c0 .414.346.75.773.75h34.454c.427 0 .773-.336.773-.75V13.75c0-.414-.346-.75-.773-.75H24"/></svg>
<div class="abs t" style="left:162.5px;top:966.7px;font-size:17.33px;color:rgba(255,255,255,.88);letter-spacing:-1.267px;">src</div>
<div class="abs t" style="left:503px;top:966.7px;font-size:17.33px;color:rgba(255,255,255,.88);letter-spacing:-0.766px;">4.00 KB</div>
<div class="abs t" style="left:871px;top:966.7px;font-size:17.33px;color:rgba(255,255,255,.88);letter-spacing:0.236px;">drwxrwxr-x</div>
<div class="abs t" style="left:1285px;top:966.7px;font-size:17.33px;color:rgba(255,255,255,.88);letter-spacing:-0.087px;">2019-05-16 00:07:37</div>
<div class="blk" style="left:65px;top:1000px;width:1446px;height:49px;background:#232323;border-bottom:1px solid #333335"></div>
<div class="blk" style="left:81px;top:1015px;width:18px;height:18px;border:2px solid #444446;border-radius:3px;"></div>
<svg class="abs ic" style="left:134.6px;top:1011.8px;width:21px;height:21px;color:#d9d9d9;stroke-width:3.6px;" viewBox="0 0 48 48"><path d="M6 13h18l-2.527-3.557a1.077 1.077 0 0 0-.88-.443H6.774C6.346 9 6 9.336 6 9.75v29.5c0 .414.346.75.773.75h34.454c.427 0 .773-.336.773-.75V13.75c0-.414-.346-.75-.773-.75H24"/></svg>
<div class="abs t" style="left:162.5px;top:1015.7px;font-size:17.33px;color:rgba(255,255,255,.88);letter-spacing:-0.457px;">tests</div>
<div class="abs t" style="left:503px;top:1015.7px;font-size:17.33px;color:rgba(255,255,255,.88);letter-spacing:-0.766px;">4.00 KB</div>
<div class="abs t" style="left:871px;top:1015.7px;font-size:17.33px;color:rgba(255,255,255,.88);letter-spacing:0.236px;">drwxrwxr-x</div>
<div class="abs t" style="left:1285px;top:1015.7px;font-size:17.33px;color:rgba(255,255,255,.88);letter-spacing:-0.087px;">2019-05-16 00:07:37</div>
<div class="blk" style="left:65px;top:1049px;width:1446px;height:49px;background:#232323;border-bottom:1px solid #333335"></div>
<div class="blk" style="left:81px;top:1064px;width:18px;height:18px;border:2px solid #444446;border-radius:3px;"></div>
<svg class="abs ic" style="left:134.6px;top:1060.8px;width:21px;height:21px;color:#d9d9d9;stroke-width:3.6px;" viewBox="0 0 48 48"><path d="M6 13h18l-2.527-3.557a1.077 1.077 0 0 0-.88-.443H6.774C6.346 9 6 9.336 6 9.75v29.5c0 .414.346.75.773.75h34.454c.427 0 .773-.336.773-.75V13.75c0-.414-.346-.75-.773-.75H24"/></svg>
<div class="abs t" style="left:162.5px;top:1064.7px;font-size:17.33px;color:rgba(255,255,255,.88);letter-spacing:0.387px;">utils</div>
<div class="abs t" style="left:503px;top:1064.7px;font-size:17.33px;color:rgba(255,255,255,.88);letter-spacing:-0.766px;">4.00 KB</div>
<div class="abs t" style="left:871px;top:1064.7px;font-size:17.33px;color:rgba(255,255,255,.88);letter-spacing:0.236px;">drwxrwxr-x</div>
<div class="abs t" style="left:1285px;top:1064.7px;font-size:17.33px;color:rgba(255,255,255,.88);letter-spacing:-0.087px;">2019-05-16 00:07:37</div>
<div class="blk" style="left:1521px;top:105px;width:8px;height:1174px;background:#38393b"></div>
<svg class="abs" style="left:1521px;top:686px;width:8px;height:13px" viewBox="0 0 8 13"><g fill="#d0d0d0"><rect x="1.5" y="1" width="1.6" height="1.6"/><rect x="4.9" y="1" width="1.6" height="1.6"/><rect x="1.5" y="5.5" width="1.6" height="1.6"/><rect x="4.9" y="5.5" width="1.6" height="1.6"/><rect x="1.5" y="10" width="1.6" height="1.6"/><rect x="4.9" y="10" width="1.6" height="1.6"/></g></svg>
<div class="blk" style="left:1539px;top:120px;width:91px;height:30px;border-radius:4px;background:#000d4d"></div>
<div class="abs t" style="left:1550px;top:127.5px;font-size:16px;color:#3c7eff;letter-spacing:0.064px;">redis.conf</div>
<div class="blk" style="left:2420px;top:119px;width:32px;height:32px;border-radius:4px;background:#2b2b2d"></div>
<svg class="abs ic" style="left:2426px;top:125px;width:20px;height:20px;color:#cfcfcf;stroke-width:3.2px;" viewBox="0 0 48 48"><path d="M21 13v9m18 20H9a1 1 0 0 1-1-1V7a1 1 0 0 1 1-1h22.55a1 1 0 0 1 .748.336l7.45 8.38a1 1 0 0 1 .252.664V41a1 1 0 0 1-1 1ZM14 6h14v15a1 1 0 0 1-1 1H15a1 1 0 0 1-1-1V6Z"/></svg>
<div class="blk" style="left:2463px;top:119px;width:32px;height:32px;border-radius:4px;background:#2b2b2d"></div>
<svg class="abs ic" style="left:2469px;top:125px;width:20px;height:20px;color:#d0d0d0;stroke-width:3.2px;" viewBox="0 0 48 48"><path d="M9.857 9.858 24 24m0 0 14.142 14.142M24 24 38.142 9.858M24 24 9.857 38.142"/></svg>
<div class="blk" style="left:1539px;top:165px;width:956px;height:1104px;background:#1e1e1e;overflow:hidden">
<div class="blk" style="left:71px;top:0;width:885px;height:24px;border:1px solid #282828"></div>
<div class="blk" style="left:940px;top:0;width:16px;height:2px;background:#6a6a6a"></div>
<pre class="abs" style="left:0;top:2px;width:39px;text-align:right;font-family:'Liberation Mono',monospace;font-size:16.08px;line-height:23.76px;color:#858585"><span style="color:#c6c6c6">1</span>
2
3
4
5
6
7
8
9
10
11
12
13
14
15
16
17
18
19
20
21
22
23
24
25
26
27
28
29
30
31
32
33
34
35
36
37
38
39
40
41
42
43
44
45
46
47</pre>
<pre class="abs" style="left:71px;top:2px;font-family:'Liberation Mono',monospace;font-size:16.08px;line-height:23.76px;color:#d4d4d4;-webkit-text-stroke:0.25px #d4d4d4"># Redis configuration file example.
#
# Note that in order to read the configuration file, Redis must be
# started with the file path as first argument:
#
# ./redis-server /path/to/redis.conf

# Note on units: when memory size is needed, it is possible to specify
# it in the usual form of 1k 5GB 4M and so forth:
#
# 1k =&gt; 1000 bytes
# 1kb =&gt; 1024 bytes
# 1m =&gt; 1000000 bytes
# 1mb =&gt; 1024*1024 bytes
# 1g =&gt; 1000000000 bytes
# 1gb =&gt; 1024*1024*1024 bytes
#
# units are case insensitive so 1GB 1Gb 1gB are all the same.

################################## INCLUDES ###################################

# Include one or more other config files here.  This is useful if you
# have a standard template that goes to all Redis servers but also need
# to customize a few per-server settings.  Include files can include
# other files, so use this wisely.
#
# Notice option &quot;include&quot; won&#x27;t be rewritten by command &quot;CONFIG REWRITE&quot;
# from admin or Redis Sentinel. Since Redis always uses the last processed
# line as value of a configuration directive, you&#x27;d better put includes
# at the beginning of this file to avoid overwriting config change at runtime.
#
# If instead you are interested in using includes to override configuration
# options, it is better to use include as the last line.
#
# include /path/to/local.conf
# include /path/to/other.conf

################################## MODULES #####################################

# Load modules at startup. If the server is not able to load modules
# it will abort. It is possible to use multiple loadmodule directives.
#
# loadmodule /path/to/my_module.so
# loadmodule /path/to/other_module.so

################################## NETWORK #####################################
</pre>
</div>
<div style="position:absolute;left:0;top:0;width:2560px;height:1279px;overflow:hidden;pointer-events:none"><div class="wm" style="left:-119.0px;top:-83.5px">admin</div><div class="wm" style="left:228.0px;top:-83.5px">admin</div><div class="wm" style="left:575.0px;top:-83.5px">admin</div><div class="wm" style="left:922.0px;top:-83.5px">admin</div><div class="wm" style="left:1269.0px;top:-83.5px">admin</div><div class="wm" style="left:1616.0px;top:-83.5px">admin</div><div class="wm" style="left:1963.0px;top:-83.5px">admin</div><div class="wm" style="left:2310.0px;top:-83.5px">admin</div><div class="wm" style="left:2657.0px;top:-83.5px">admin</div><div class="wm" style="left:3004.0px;top:-83.5px">admin</div><div class="wm" style="left:-292.5px;top:49.5px">admin</div><div class="wm" style="left:54.5px;top:49.5px">admin</div><div class="wm" style="left:401.5px;top:49.5px">admin</div><div class="wm" style="left:748.5px;top:49.5px">admin</div><div class="wm" style="left:1095.5px;top:49.5px">admin</div><div class="wm" style="left:1442.5px;top:49.5px">admin</div><div class="wm" style="left:1789.5px;top:49.5px">admin</div><div class="wm" style="left:2136.5px;top:49.5px">admin</div><div class="wm" style="left:2483.5px;top:49.5px">admin</div><div class="wm" style="left:2830.5px;top:49.5px">admin</div><div class="wm" style="left:-119.0px;top:182.5px">admin</div><div class="wm" style="left:228.0px;top:182.5px">admin</div><div class="wm" style="left:575.0px;top:182.5px">admin</div><div class="wm" style="left:922.0px;top:182.5px">admin</div><div class="wm" style="left:1269.0px;top:182.5px">admin</div><div class="wm" style="left:1616.0px;top:182.5px">admin</div><div class="wm" style="left:1963.0px;top:182.5px">admin</div><div class="wm" style="left:2310.0px;top:182.5px">admin</div><div class="wm" style="left:2657.0px;top:182.5px">admin</div><div class="wm" style="left:3004.0px;top:182.5px">admin</div><div class="wm" style="left:-292.5px;top:315.5px">admin</div><div class="wm" style="left:54.5px;top:315.5px">admin</div><div class="wm" style="left:401.5px;top:315.5px">admin</div><div class="wm" style="left:748.5px;top:315.5px">admin</div><div class="wm" style="left:1095.5px;top:315.5px">admin</div><div class="wm" style="left:1442.5px;top:315.5px">admin</div><div class="wm" style="left:1789.5px;top:315.5px">admin</div><div class="wm" style="left:2136.5px;top:315.5px">admin</div><div class="wm" style="left:2483.5px;top:315.5px">admin</div><div class="wm" style="left:2830.5px;top:315.5px">admin</div><div class="wm" style="left:-119.0px;top:448.5px">admin</div><div class="wm" style="left:228.0px;top:448.5px">admin</div><div class="wm" style="left:575.0px;top:448.5px">admin</div><div class="wm" style="left:922.0px;top:448.5px">admin</div><div class="wm" style="left:1269.0px;top:448.5px">admin</div><div class="wm" style="left:1616.0px;top:448.5px">admin</div><div class="wm" style="left:1963.0px;top:448.5px">admin</div><div class="wm" style="left:2310.0px;top:448.5px">admin</div><div class="wm" style="left:2657.0px;top:448.5px">admin</div><div class="wm" style="left:3004.0px;top:448.5px">admin</div><div class="wm" style="left:-292.5px;top:581.5px">admin</div><div class="wm" style="left:54.5px;top:581.5px">admin</div><div class="wm" style="left:401.5px;top:581.5px">admin</div><div class="wm" style="left:748.5px;top:581.5px">admin</div><div class="wm" style="left:1095.5px;top:581.5px">admin</div><div class="wm" style="left:1442.5px;top:581.5px">admin</div><div class="wm" style="left:1789.5px;top:581.5px">admin</div><div class="wm" style="left:2136.5px;top:581.5px">admin</div><div class="wm" style="left:2483.5px;top:581.5px">admin</div><div class="wm" style="left:2830.5px;top:581.5px">admin</div><div class="wm" style="left:-119.0px;top:714.5px">admin</div><div class="wm" style="left:228.0px;top:714.5px">admin</div><div class="wm" style="left:575.0px;top:714.5px">admin</div><div class="wm" style="left:922.0px;top:714.5px">admin</div><div class="wm" style="left:1269.0px;top:714.5px">admin</div><div class="wm" style="left:1616.0px;top:714.5px">admin</div><div class="wm" style="left:1963.0px;top:714.5px">admin</div><div class="wm" style="left:2310.0px;top:714.5px">admin</div><div class="wm" style="left:2657.0px;top:714.5px">admin</div><div class="wm" style="left:3004.0px;top:714.5px">admin</div><div class="wm" style="left:-292.5px;top:847.5px">admin</div><div class="wm" style="left:54.5px;top:847.5px">admin</div><div class="wm" style="left:401.5px;top:847.5px">admin</div><div class="wm" style="left:748.5px;top:847.5px">admin</div><div class="wm" style="left:1095.5px;top:847.5px">admin</div><div class="wm" style="left:1442.5px;top:847.5px">admin</div><div class="wm" style="left:1789.5px;top:847.5px">admin</div><div class="wm" style="left:2136.5px;top:847.5px">admin</div><div class="wm" style="left:2483.5px;top:847.5px">admin</div><div class="wm" style="left:2830.5px;top:847.5px">admin</div><div class="wm" style="left:-119.0px;top:980.5px">admin</div><div class="wm" style="left:228.0px;top:980.5px">admin</div><div class="wm" style="left:575.0px;top:980.5px">admin</div><div class="wm" style="left:922.0px;top:980.5px">admin</div><div class="wm" style="left:1269.0px;top:980.5px">admin</div><div class="wm" style="left:1616.0px;top:980.5px">admin</div><div class="wm" style="left:1963.0px;top:980.5px">admin</div><div class="wm" style="left:2310.0px;top:980.5px">admin</div><div class="wm" style="left:2657.0px;top:980.5px">admin</div><div class="wm" style="left:3004.0px;top:980.5px">admin</div><div class="wm" style="left:-292.5px;top:1113.5px">admin</div><div class="wm" style="left:54.5px;top:1113.5px">admin</div><div class="wm" style="left:401.5px;top:1113.5px">admin</div><div class="wm" style="left:748.5px;top:1113.5px">admin</div><div class="wm" style="left:1095.5px;top:1113.5px">admin</div><div class="wm" style="left:1442.5px;top:1113.5px">admin</div><div class="wm" style="left:1789.5px;top:1113.5px">admin</div><div class="wm" style="left:2136.5px;top:1113.5px">admin</div><div class="wm" style="left:2483.5px;top:1113.5px">admin</div><div class="wm" style="left:2830.5px;top:1113.5px">admin</div><div class="wm" style="left:-119.0px;top:1246.5px">admin</div><div class="wm" style="left:228.0px;top:1246.5px">admin</div><div class="wm" style="left:575.0px;top:1246.5px">admin</div><div class="wm" style="left:922.0px;top:1246.5px">admin</div><div class="wm" style="left:1269.0px;top:1246.5px">admin</div><div class="wm" style="left:1616.0px;top:1246.5px">admin</div><div class="wm" style="left:1963.0px;top:1246.5px">admin</div><div class="wm" style="left:2310.0px;top:1246.5px">admin</div><div class="wm" style="left:2657.0px;top:1246.5px">admin</div><div class="wm" style="left:3004.0px;top:1246.5px">admin</div><div class="wm" style="left:-292.5px;top:1379.5px">admin</div><div class="wm" style="left:54.5px;top:1379.5px">admin</div><div class="wm" style="left:401.5px;top:1379.5px">admin</div><div class="wm" style="left:748.5px;top:1379.5px">admin</div><div class="wm" style="left:1095.5px;top:1379.5px">admin</div><div class="wm" style="left:1442.5px;top:1379.5px">admin</div><div class="wm" style="left:1789.5px;top:1379.5px">admin</div><div class="wm" style="left:2136.5px;top:1379.5px">admin</div><div class="wm" style="left:2483.5px;top:1379.5px">admin</div><div class="wm" style="left:2830.5px;top:1379.5px">admin</div></div>
</body></html>
